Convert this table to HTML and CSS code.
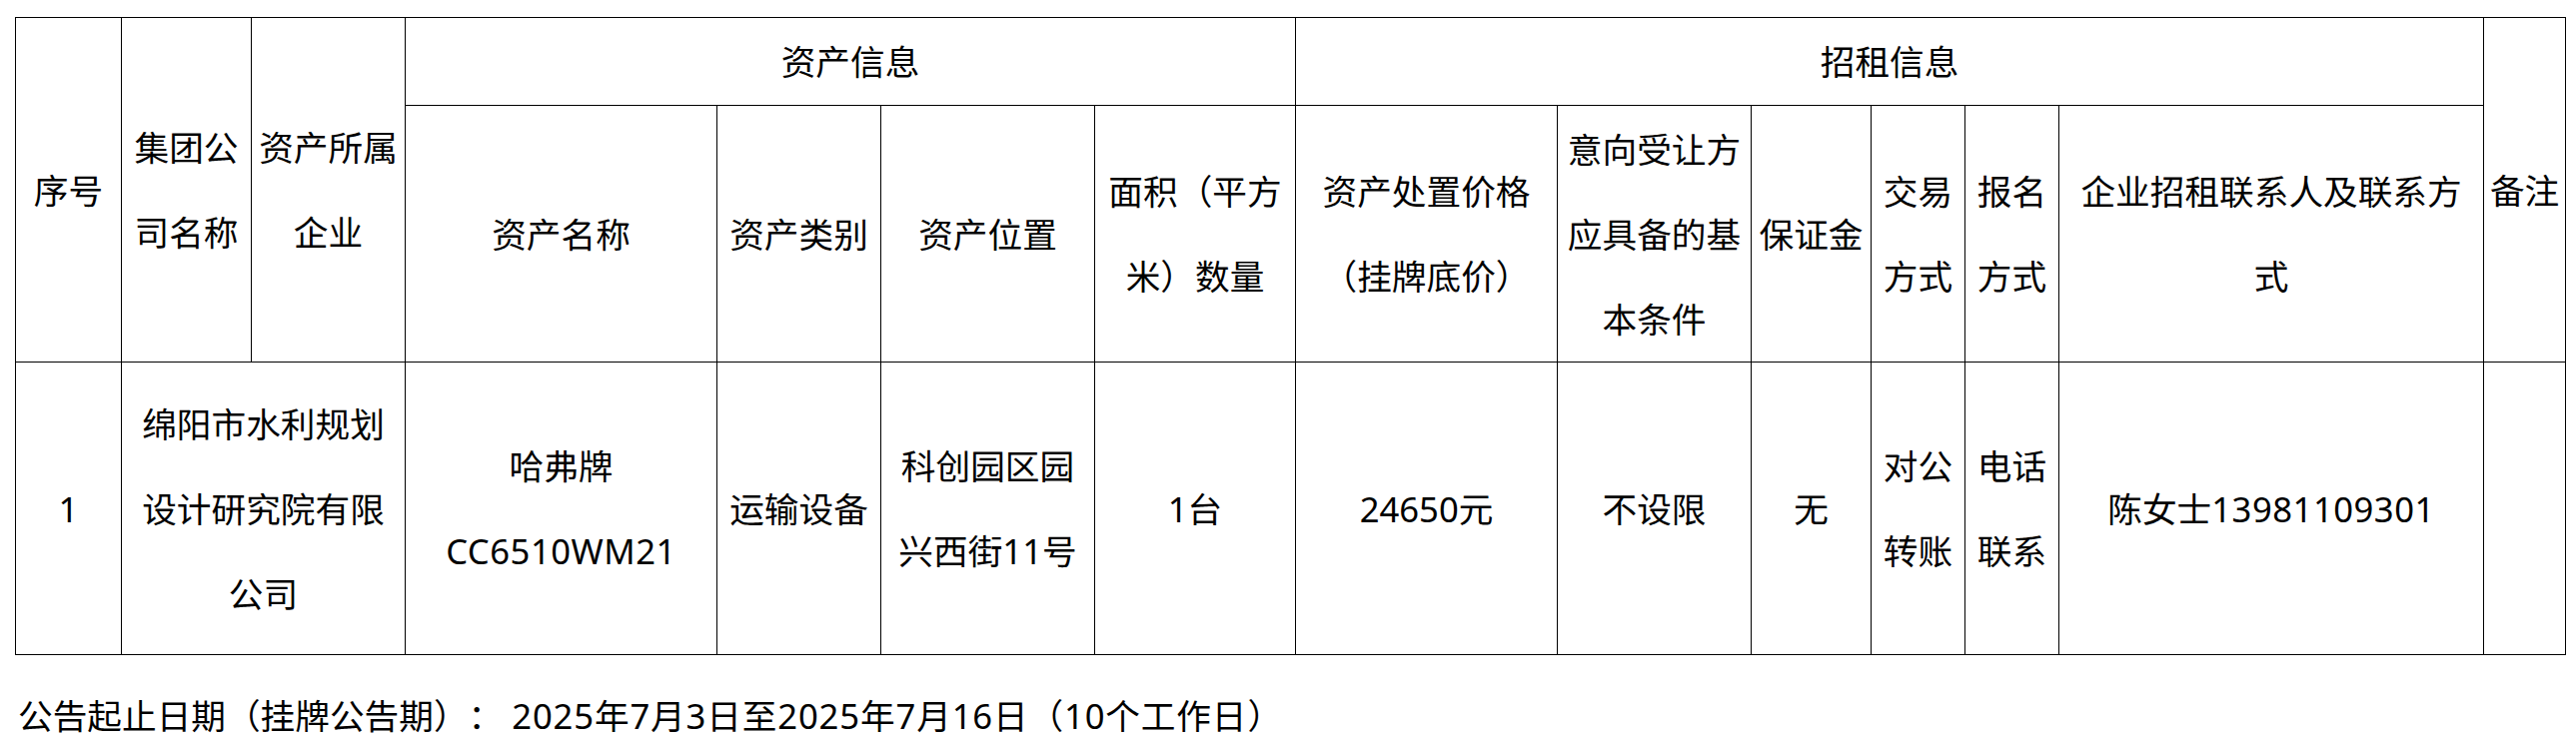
FILE: index.html
```html
<!DOCTYPE html>
<html lang="zh-CN">
<head>
<meta charset="utf-8">
<title>资产招租信息</title>
<link rel="stylesheet" href="styles.css">
</head>
<body>
<div class="page">
  <table class="grid">
    <colgroup>
      <col class="c-no">
      <col class="c-group">
      <col class="c-owner">
      <col class="c-name">
      <col class="c-type">
      <col class="c-loc">
      <col class="c-area">
      <col class="c-price">
      <col class="c-cond">
      <col class="c-deposit">
      <col class="c-trade">
      <col class="c-apply">
      <col class="c-contact">
      <col class="c-note">
    </colgroup>
    <tr class="r-head1">
      <td rowspan="2">序号</td>
      <td rowspan="2">集团公<br>司名称</td>
      <td rowspan="2">资产所属<br>企业</td>
      <td colspan="4">资产信息</td>
      <td colspan="6">招租信息</td>
      <td rowspan="2" class="tight">备注</td>
    </tr>
    <tr class="r-head2">
      <td>资产名称</td>
      <td>资产类别</td>
      <td>资产位置</td>
      <td>面积（平方<br>米）数量</td>
      <td>资产处置价格<br>（挂牌底价）</td>
      <td>意向受让方<br>应具备的基<br>本条件</td>
      <td>保证金</td>
      <td>交易<br>方式</td>
      <td>报名<br>方式</td>
      <td>企业招租联系人及联系方<br>式</td>
    </tr>
    <tr class="r-body">
      <td>1</td>
      <td colspan="2">绵阳市水利规划<br>设计研究院有限<br>公司</td>
      <td>哈弗牌<br><span class="latin">CC6510WM21</span></td>
      <td>运输设备</td>
      <td>科创园区园<br>兴西街11号</td>
      <td>1台</td>
      <td>24650元</td>
      <td>不设限</td>
      <td>无</td>
      <td>对公<br>转账</td>
      <td>电话<br>联系</td>
      <td>陈女士<span class="latin">13981109301</span></td>
      <td></td>
    </tr>
  </table>
  <p class="period">公告起止日期（挂牌公告期）： <span class="dates">2025年7月3日至2025年7月16日（10个工作日）</span></p>
</div>
</body>
</html>
```

FILE: styles.css
```css
html, body {
  margin: 0;
  padding: 0;
  background: #ffffff;
}

body {
  font-family: "Noto Sans", "Noto Sans CJK SC", sans-serif;
  font-size: 34.67px;
  color: #000000;
  text-spacing-trim: space-all;
}

.page {
  padding: 17px 0 0 15px;
}

.grid {
  border-collapse: collapse;
  table-layout: fixed;
  width: 2553px;
}

.grid td {
  border: 1px solid #000000;
  padding: 0 4px;
  text-align: center;
  vertical-align: middle;
  line-height: 85px;
  white-space: nowrap;
}

.grid td.tight {
  padding: 0;
}

.latin {
  letter-spacing: 0.5px;
}

.r-head1 { height: 88px; }
.r-head2 { height: 257px; }
.r-body { height: 293px; }

.c-no { width: 106px; }
.c-group { width: 130px; }
.c-owner { width: 154px; }
.c-name { width: 312px; }
.c-type { width: 164px; }
.c-loc { width: 214px; }
.c-area { width: 201px; }
.c-price { width: 262px; }
.c-cond { width: 194px; }
.c-deposit { width: 120px; }
.c-trade { width: 94px; }
.c-apply { width: 94px; }
.c-contact { width: 425px; }
.c-note { width: 82px; }

.period {
  margin: 18px 0 0 3px;
  line-height: 85px;
  white-space: nowrap;
}

.dates {
  letter-spacing: 0.85px;
}
```
